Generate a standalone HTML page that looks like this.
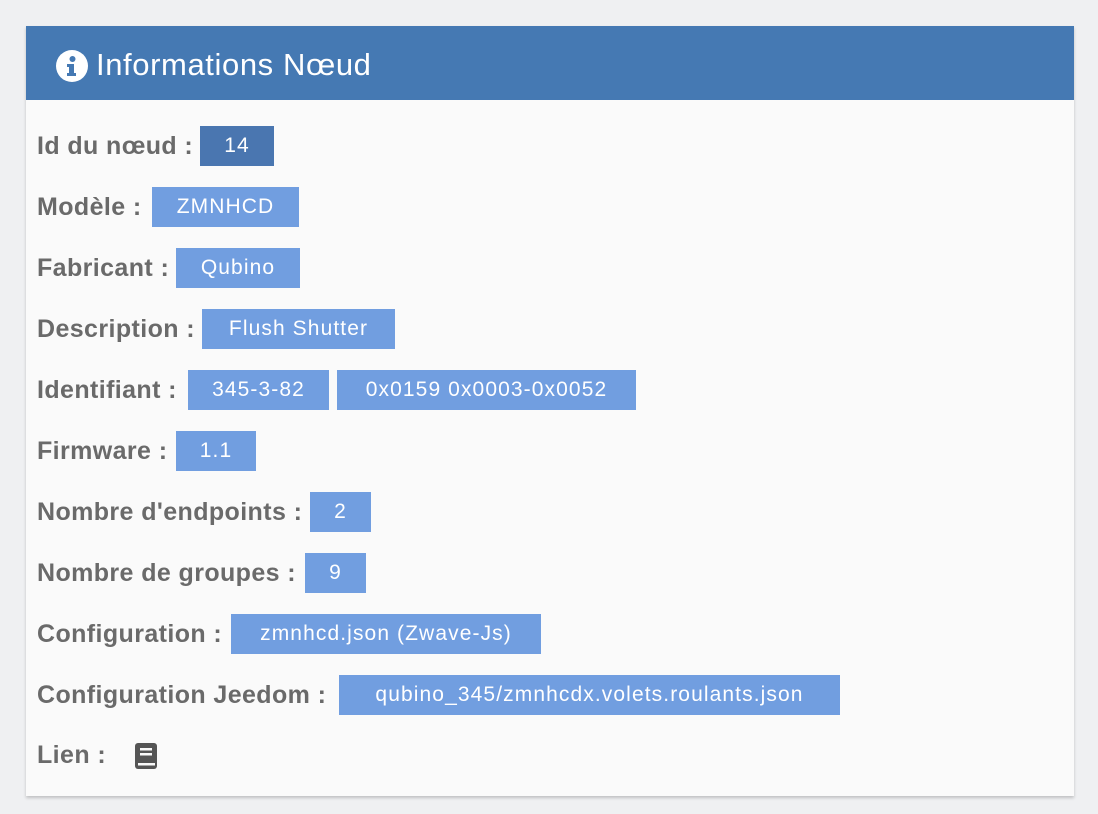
<!DOCTYPE html>
<html><head><meta charset="utf-8"><style>
body{margin:0;width:1098px;height:814px;background:#eff0f2;font-family:"Liberation Sans",sans-serif;position:relative;overflow:hidden}
.panel{position:absolute;left:26px;top:26px;width:1048px;height:770px;background:#fafafa;box-shadow:0 2px 3px rgba(0,0,0,.2)}
.hd{height:74px;background:#4579b3;color:#fff;font-size:31px;letter-spacing:0.6px;line-height:78px;padding-left:70px;position:relative}
.hd svg{position:absolute;left:30px;top:24px}
.l{position:absolute;left:37px;font-weight:bold;font-size:25px;letter-spacing:0.4px;color:#6a6a6a;height:40px;line-height:40px}
.b{position:absolute;height:40px;line-height:40px;background:#719ee0;color:#fff;font-size:21px;letter-spacing:1.1px;text-align:center;white-space:nowrap}
</style></head><body>
<div class="panel"><div class="hd"><svg width="32" height="32" viewBox="0 0 32 32"><circle cx="16" cy="16" r="16" fill="#fff"/><circle cx="16.5" cy="9" r="3" fill="#4579b3"/><path d="M11 14h7v9h2v3h-9v-3h2v-6h-2z" fill="#4579b3"/></svg>Informations Nœud</div></div>
<div class="l" style="top:126px">Id du nœud :</div><div class="b" style="top:126px;left:200px;width:74px;background:#4a76b0">14</div>
<div class="l" style="top:187px">Modèle :</div><div class="b" style="top:187px;left:152px;width:147px">ZMNHCD</div>
<div class="l" style="top:248px">Fabricant :</div><div class="b" style="top:248px;left:176px;width:124px">Qubino</div>
<div class="l" style="top:309px">Description :</div><div class="b" style="top:309px;left:202px;width:193px">Flush Shutter</div>
<div class="l" style="top:370px">Identifiant :</div><div class="b" style="top:370px;left:188px;width:141px">345-3-82</div><div class="b" style="top:370px;left:337px;width:299px">0x0159 0x0003-0x0052</div>
<div class="l" style="top:431px">Firmware :</div><div class="b" style="top:431px;left:176px;width:80px">1.1</div>
<div class="l" style="top:492px">Nombre d'endpoints :</div><div class="b" style="top:492px;left:310px;width:61px">2</div>
<div class="l" style="top:553px">Nombre de groupes :</div><div class="b" style="top:553px;left:305px;width:61px">9</div>
<div class="l" style="top:614px">Configuration :</div><div class="b" style="top:614px;left:231px;width:310px">zmnhcd.json (Zwave-Js)</div>
<div class="l" style="top:675px">Configuration Jeedom :</div><div class="b" style="top:675px;left:339px;width:501px">qubino_345/zmnhcdx.volets.roulants.json</div>
<div class="l" style="top:735px">Lien :</div>
<svg style="position:absolute;left:135px;top:743px" width="22" height="26" viewBox="0 0 22 26"><rect x="0" y="0" width="22" height="26" rx="3" fill="#555"/><rect x="5" y="5" width="12" height="2.5" fill="#fafafa"/><rect x="5" y="10" width="12" height="2.5" fill="#fafafa"/><rect x="3" y="20" width="17" height="2.5" fill="#fafafa"/></svg>
</body></html>
